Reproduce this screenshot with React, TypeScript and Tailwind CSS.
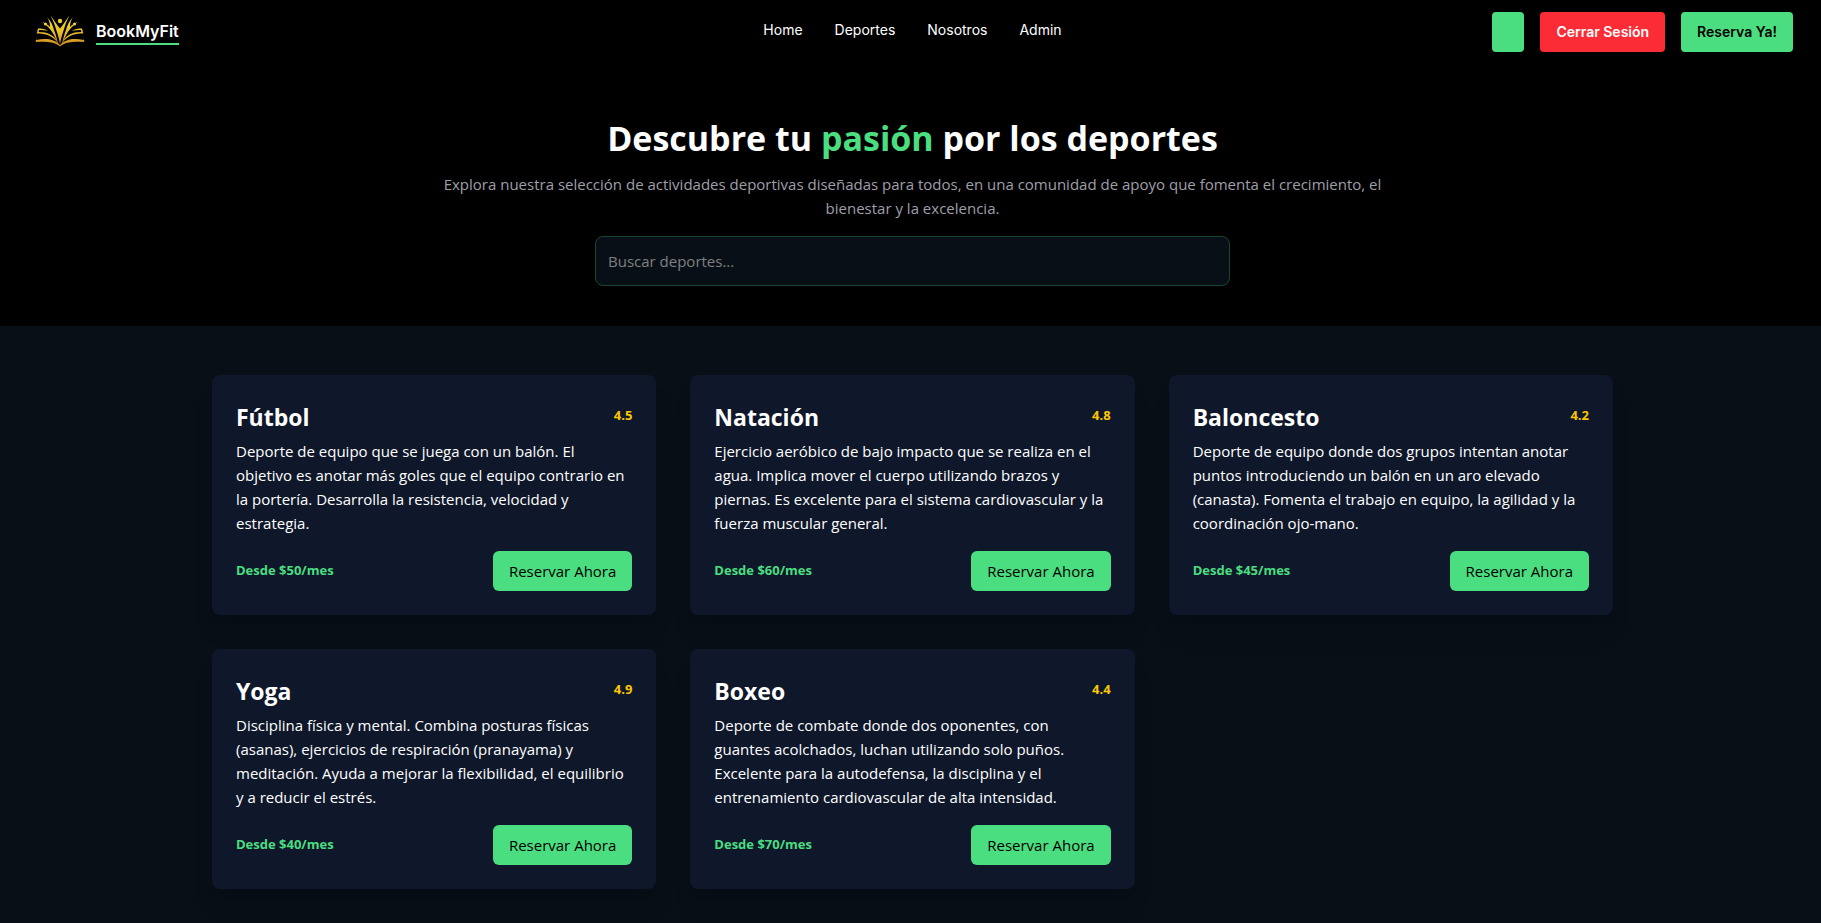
import { useState } from "react"

type Sport = {
  name: string
  rating: string
  description: string
  price: number
}

const navLinks = ["Home", "Deportes", "Nosotros", "Admin"]

const sports: Sport[] = [
  {
    name: "Fútbol",
    rating: "4.5",
    description:
      "Deporte de equipo que se juega con un balón. El objetivo es anotar más goles que el equipo contrario en la portería. Desarrolla la resistencia, velocidad y estrategia.",
    price: 50,
  },
  {
    name: "Natación",
    rating: "4.8",
    description:
      "Ejercicio aeróbico de bajo impacto que se realiza en el agua. Implica mover el cuerpo utilizando brazos y piernas. Es excelente para el sistema cardiovascular y la fuerza muscular general.",
    price: 60,
  },
  {
    name: "Baloncesto",
    rating: "4.2",
    description:
      "Deporte de equipo donde dos grupos intentan anotar puntos introduciendo un balón en un aro elevado (canasta). Fomenta el trabajo en equipo, la agilidad y la coordinación ojo-mano.",
    price: 45,
  },
  {
    name: "Yoga",
    rating: "4.9",
    description:
      "Disciplina física y mental. Combina posturas físicas (asanas), ejercicios de respiración (pranayama) y meditación. Ayuda a mejorar la flexibilidad, el equilibrio y a reducir el estrés.",
    price: 40,
  },
  {
    name: "Boxeo",
    rating: "4.4",
    description:
      "Deporte de combate donde dos oponentes, con guantes acolchados, luchan utilizando solo puños. Excelente para la autodefensa, la disciplina y el entrenamiento cardiovascular de alta intensidad.",
    price: 70,
  },
]

// Right half of the logo, mirrored for the left one
function LogoHalf() {
  return (
    <>
      <circle cx="42.5" cy="12" r="1.6" />
      <path d="M37.500 3.500C34 8 31 13 28 16.500v15.500c1-6 3-12 5-18 1-4 3-7 4.500-10.500z" />
      <path d="M46 10c-4 1-6 3-8 5 0-4 1-7 3-10-4 4-6 9-7 13-2 5-3 9-4 14 3-7 5-12 9-16 2-2 4-4 7-6z" />
      <path d="M50 16.500l1.300 5c-9 0-16 2-21.800 10.500 4-9 10-12 20-12l-.7-2c-3 0-6 0-9 1 3-2 6-2.500 10.200-2.500z" />
      <path d="M50.500 22.500l1.300 5.500c-9-2-18-1.500-23.800 5v1.500c5-4.500 14-5 24-4.500l.3-1-1.800-6.500z" />
    </>
  )
}

function Logo() {
  return (
    <svg viewBox="0 0 56 40" className="h-10 w-14" aria-hidden="true">
      <defs>
        <linearGradient id="gold" gradientUnits="userSpaceOnUse" x1="0" y1="4" x2="0" y2="34">
          <stop offset="0" stopColor="#f0dc30" />
          <stop offset="0.5" stopColor="#e8c22a" />
          <stop offset="1" stopColor="#cf8a20" />
        </linearGradient>
      </defs>
      <g fill="url(#gold)">
        <circle cx="28" cy="9" r="2.2" />
        <LogoHalf />
        <g transform="matrix(-1 0 0 1 56 0)">
          <LogoHalf />
        </g>
      </g>
    </svg>
  )
}

function Header() {
  return (
    <header className="grid grid-cols-[1fr_auto_1fr] items-center pt-3 pr-7 pl-8 font-['Inter',sans-serif] text-sm">
      <a href="#" className="flex items-center gap-2">
        <Logo />
        <span className="border-b-2 border-[#4ade80] text-base leading-6 font-semibold">BookMyFit</span>
      </a>
      <nav className="flex gap-8 pb-1">
        {navLinks.map((link) => (
          <a key={link} href="#" className="hover:text-green-400">
            {link}
          </a>
        ))}
      </nav>
      <div className="flex justify-end gap-4 font-semibold">
        <button aria-label="Perfil" className="h-10 w-8 rounded-sm bg-[#4ade80]" />
        <button className="h-10 rounded-sm bg-[#fb2c36] px-4">Cerrar Sesión</button>
        <button className="h-10 rounded-sm bg-[#4ade80] px-4 text-black">Reserva Ya!</button>
      </div>
    </header>
  )
}

function SportCard({ sport }: { sport: Sport }) {
  return (
    <article className="rounded-lg bg-[#0f172a] p-6 shadow-xl">
      <div className="mb-1 flex items-start justify-between">
        <h2 className="text-[23px] leading-9 font-bold">{sport.name}</h2>
        <span className="pt-1 text-[13px] leading-6 font-bold text-[#fdc700]">{sport.rating}</span>
      </div>
      <p className="mb-4 pr-1 text-[15px] leading-6">{sport.description}</p>
      <div className="flex items-center justify-between">
        <span className="text-[13px] font-bold text-[#4ade80]">Desde ${sport.price}/mes</span>
        <button className="h-10 rounded-md bg-[#4ade80] px-4 text-[15px] text-black">Reservar Ahora</button>
      </div>
    </article>
  )
}

export default function App() {
  const [query, setQuery] = useState("")
  const visible = sports.filter((s) => s.name.toLowerCase().includes(query.toLowerCase()))

  return (
    <div className="min-h-screen bg-[#080f17] font-['Open_Sans',sans-serif] text-white">
      <div className="bg-black pb-10">
        <Header />

        {/* Hero */}
        <section className="flex flex-col items-center pt-16 pl-1 text-center">
          <h1 className="text-[34px] leading-11 font-bold">
            Descubre tu <span className="text-[#4ade80]">pasión</span> por los deportes
          </h1>
          <p className="mt-3 max-w-[960px] text-[15px] leading-6 text-[#9f9fa9]">
            Explora nuestra selección de actividades deportivas diseñadas para todos, en una comunidad de apoyo que
            fomenta el crecimiento, el bienestar y la excelencia.
          </p>
          <input
            type="text"
            aria-label="Buscar deportes"
            placeholder="Buscar deportes..."
            value={query}
            onChange={(e) => setQuery(e.target.value)}
            className="mt-4 h-[50px] w-full max-w-[635px] rounded-lg border border-[#1a4530] bg-[#080f17] px-3 text-[15px] outline-none placeholder:text-[#808080]"
          />
        </section>
      </div>

      {/* Cards */}
      <main className="pt-[49px] pb-8 pl-1">
        <div className="mx-auto grid max-w-[1401px] grid-cols-1 gap-[34px] md:grid-cols-2 lg:grid-cols-3">
          {visible.map((sport) => (
            <SportCard key={sport.name} sport={sport} />
          ))}
        </div>
      </main>
    </div>
  )
}
